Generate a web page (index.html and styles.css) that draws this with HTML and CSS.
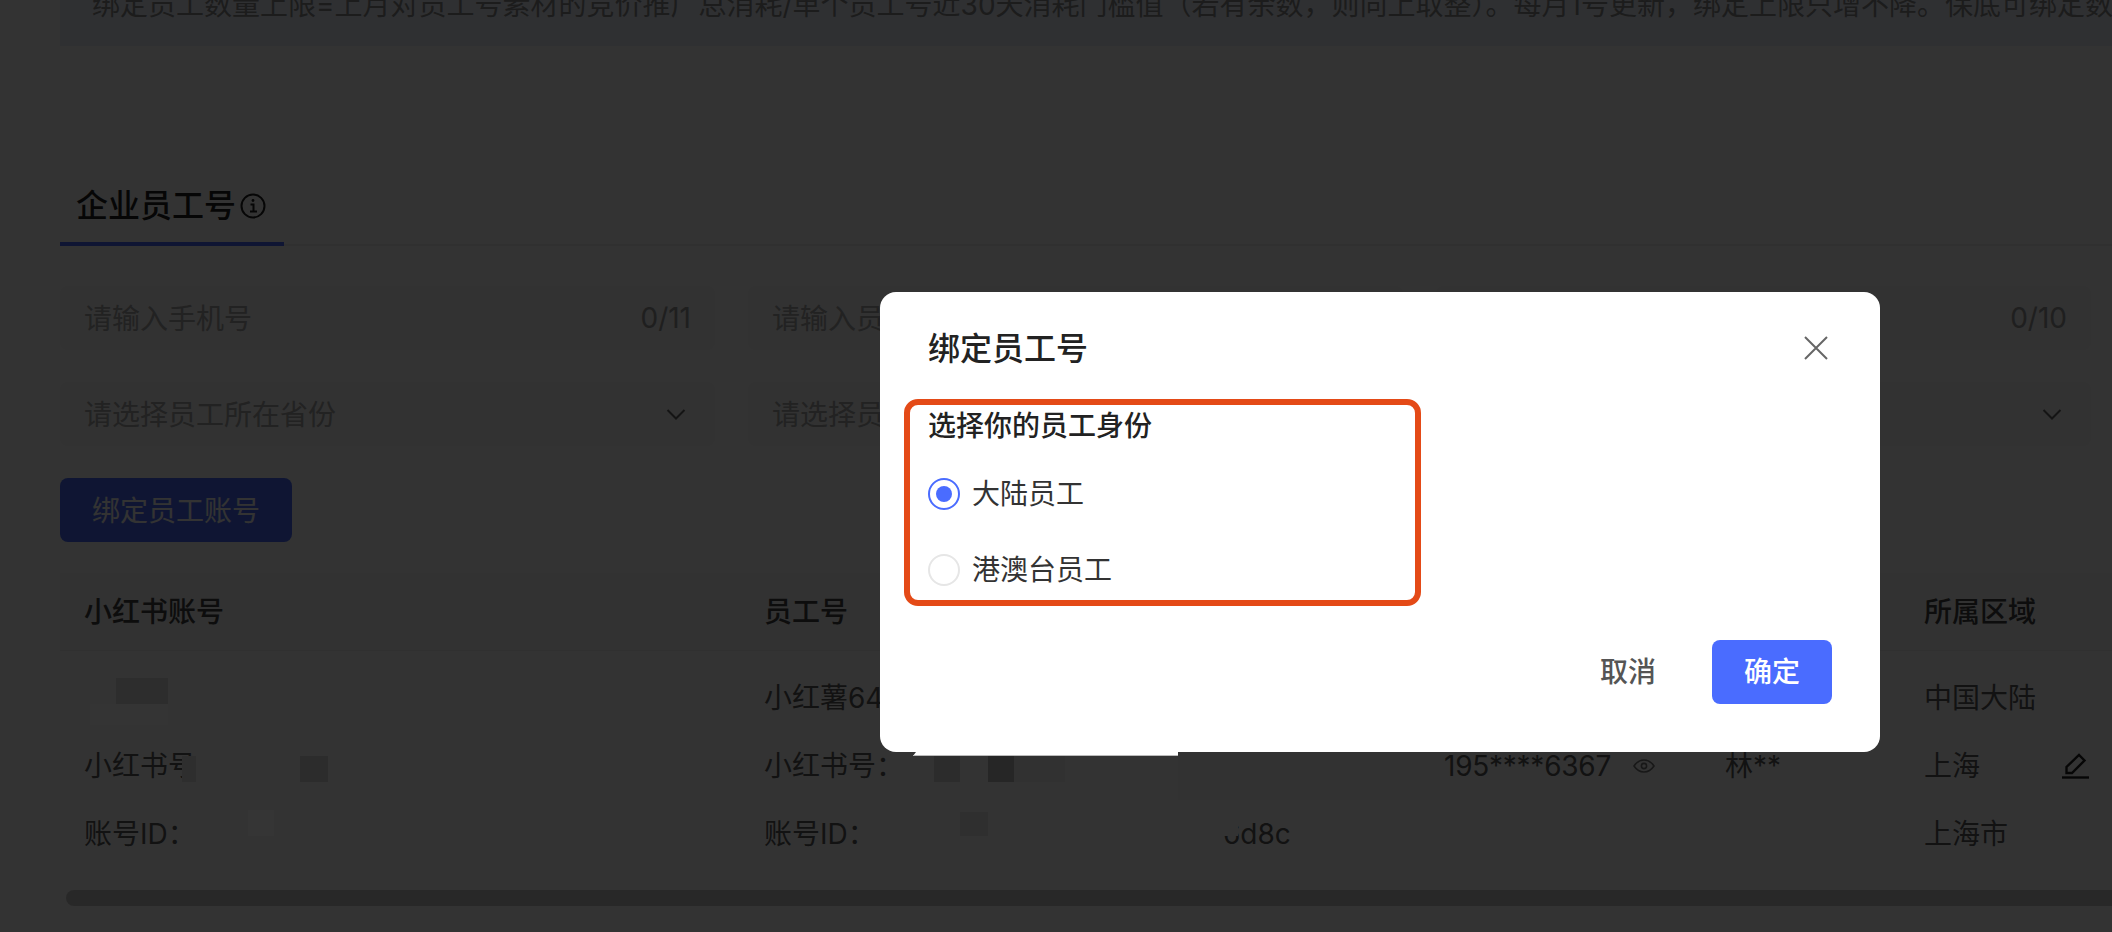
FILE: index.html
```html
<!DOCTYPE html>
<html lang="zh-CN">
<head>
	<meta charset="UTF-8">
	<title>绑定员工号</title>
	<link rel="stylesheet" href="styles.css">
</head>
<body>
	<div class="page">
		<div class="notice">绑定员工数量上限=上月对员工号素材的竞价推广总消耗/单个员工号近30天消耗门槛值（若有余数，则向上取整）。每月1号更新，绑定上限只增不降。保底可绑定数量为10个，如需增加请联系对应销售</div>

		<div class="tabs">
			<div class="tab">
				企业员工号
				<svg class="tab_info" viewBox="0 0 26 26" fill="none" stroke="currentColor" stroke-width="2">
					<circle cx="13" cy="13" r="11.5"/>
					<path d="M10.5 11.5h3v7M10 18.5h7"/>
					<circle cx="13" cy="7.5" r="1.4" fill="currentColor" stroke="none"/>
				</svg>
			</div>
		</div>

		<div class="filters">
			<div class="field"><span>请输入手机号</span><em>0/11</em></div>
			<div class="field"><span>请输入员工姓名</span><em>0/10</em></div>
			<div class="field"><span>请输入小红书号</span><em>0/10</em></div>
			<div class="field"><span>请选择员工所在省份</span><svg class="chev" viewBox="0 0 20 11" fill="none" stroke="currentColor" stroke-width="2"><path d="M1.5 1l8.5 8.5L18.5 1"/></svg></div>
			<div class="field"><span>请选择员工所在城市</span><svg class="chev" viewBox="0 0 20 11" fill="none" stroke="currentColor" stroke-width="2"><path d="M1.5 1l8.5 8.5L18.5 1"/></svg></div>
			<div class="field"><span>请选择所属区域</span><svg class="chev" viewBox="0 0 20 11" fill="none" stroke="currentColor" stroke-width="2"><path d="M1.5 1l8.5 8.5L18.5 1"/></svg></div>
		</div>

		<div class="bind_btn">绑定员工账号</div>

		<div class="table">
			<div class="row head">
				<div>小红书账号</div>
				<div>员工号</div>
				<div>手机号</div>
				<div>姓名</div>
				<div>所属区域</div>
			</div>
			<div class="row body">
				<div class="cell">
					<p>&nbsp;</p>
					<p>小红书号：</p>
					<p>账号ID：</p>
				</div>
				<div class="cell">
					<p>小红薯64</p>
					<p>小红书号：</p>
					<p class="id_line">账号ID：<span>6d8c</span></p>
				</div>
				<div class="cell">
					<p>&nbsp;</p>
					<p class="phone">195****6367
						<svg class="eye" viewBox="0 0 22 14" fill="none" stroke="currentColor" stroke-width="1.6">
							<path d="M1 7c2.600-3.900 5.900-6 10-6s7.400 2.100 10 6c-2.600 3.900-5.900 6-10 6S3.600 10.900 1 7z"/>
							<circle cx="11" cy="7" r="2.600"/>
						</svg>
					</p>
					<p>&nbsp;</p>
				</div>
				<div class="cell">
					<p>&nbsp;</p>
					<p>林**</p>
					<p>&nbsp;</p>
				</div>
				<div class="cell">
					<p>中国大陆</p>
					<p class="area">上海
						<svg class="pen" viewBox="0 0 28 28" fill="none" stroke="currentColor" stroke-width="2.4">
							<path d="M4.500 21v-6L17 3l5.500 5.500L10 21z"/>
							<path d="M0 25.500h27"/>
						</svg>
					</p>
					<p>上海市</p>
				</div>
			</div>
			<div class="scroll"><div class="scroll_thumb"></div></div>
		</div>
	</div>

	<div class="mask">
		<i class="blur b1"></i>
		<i class="blur b2"></i>
		<i class="blur b3"></i>
		<i class="blur b4"></i>
		<i class="blur b5"></i>
		<i class="blur b6"></i>
		<i class="blur b7"></i>
		<i class="blur b8"></i>
		<i class="blur b9"></i>
		<i class="blur b10"></i>
		<i class="blur b11"></i>
		<i class="blur b12"></i>

		<div class="dialog">
			<div class="dialog_head">
				<span>绑定员工号</span>
				<svg class="close" viewBox="0 0 24 24" fill="none" stroke="currentColor" stroke-width="2"><path d="M1 1l22 22M23 1L1 23"/></svg>
			</div>
			<div class="dialog_body">
				<div class="dialog_label">选择你的员工身份</div>
				<div class="options">
					<div class="option"><i class="radio on"></i>大陆员工</div>
					<div class="option"><i class="radio"></i>港澳台员工</div>
				</div>
			</div>
			<div class="dialog_foot">
				<div class="btn_cancel">取消</div>
				<div class="btn_ok">确定</div>
			</div>
			<div class="mark"></div>
			<div class="sliver"></div>
		</div>
	</div>
</body>
</html>
```

FILE: styles.css
```css
html, body {
	margin: 0;
	height: 100%;
	overflow: hidden;
}
body {
	background: #fff;
	font-family: Inter, "Noto Sans CJK SC", sans-serif;
	font-size: 28px;
	color: #5c5c5c;
}
p {
	margin: 0;
}
.page {
	padding-left: 60px;
}

.notice {
	height: 46px;
	padding: 0 0 20px 32px;
	box-sizing: border-box;
	display: flex;
	align-items: flex-end;
	overflow: hidden;
	white-space: nowrap;
	line-height: 42px;
	background: #ebf0fa;
	color: #8c8c8c;
}

.tabs {
	margin-top: 136px;
	height: 62px;
	border-bottom: 2px solid #eee;
}
.tab {
	height: 60px;
	padding: 0 18px 0 16px;
	display: inline-flex;
	align-items: flex-start;
	gap: 4px;
	border-bottom: 4px solid #4a6cff;
	font-size: 32px;
	font-weight: 500;
	line-height: 48px;
	color: #1f1f1f;
}
.tab_info {
	width: 26px;
	height: 26px;
	margin-top: 11px;
}

.filters {
	width: 2031px;
	margin-top: 40px;
	display: grid;
	grid-template-columns: repeat(3, 655px);
	gap: 32px 33px;
}
.field {
	height: 64px;
	padding: 0 24px;
	display: flex;
	align-items: center;
	justify-content: space-between;
	background: #f7f7f7;
	border-radius: 8px;
	color: #a8a8a8;
}
.field span {
	margin-bottom: 2px;
}
.field em {
	font-style: normal;
	color: #999;
}
.chev {
	width: 20px;
	height: 11px;
	margin-right: 5px;
	color: #666;
}

.bind_btn {
	width: 232px;
	height: 64px;
	margin-top: 32px;
	line-height: 66px;
	text-align: center;
	background: #4a6cff;
	border-radius: 8px;
	color: #fff;
}

.table {
	margin-top: 31px;
}
.row {
	display: grid;
	grid-template-columns: 680px 680px 281px 199px 212px;
}
.row > div {
	padding-left: 24px;
}
.head {
	height: 77px;
	line-height: 79px;
	background: #f8f8f8;
	border-bottom: 1px solid #ededed;
	font-weight: 500;
	color: #444;
}
.body {
	padding: 13px 0 12px;
}
.cell p {
	height: 68px;
	line-height: 68px;
	white-space: nowrap;
}
.id_line {
	display: flex;
}
.id_line span {
	width: 415px;
	text-align: right;
}
.phone {
	display: flex;
	align-items: center;
	gap: 22px;
	letter-spacing: -.25px;
}
.eye {
	width: 22px;
	height: 14px;
	color: #777;
}
.area {
	display: flex;
	align-items: center;
	justify-content: space-between;
}
.pen {
	width: 28px;
	height: 28px;
	margin-right: 22px;
	color: #222;
}
.scroll {
	height: 32px;
	padding: 10px 0 6px 6px;
	box-sizing: border-box;
	background: #fdfdfd;
}
.scroll_thumb {
	height: 16px;
	background: #c8c8c8;
	border-radius: 8px 0 0 8px;
}

.mask {
	position: fixed;
	inset: 0;
	background: rgba(0, 0, 0, .8);
}
/* 打码的色块 */
.blur {
	position: absolute;
}
.b1 { left: 116px; top: 678px; width: 52px; height: 26px; background: #2d2d2d; }
.b2 { left: 90px; top: 704px; width: 78px; height: 21px; background: #343434; }
.b3 { left: 182px; top: 756px; width: 14px; height: 26px; background: #2e2e2e; }
.b4 { left: 300px; top: 756px; width: 28px; height: 26px; background: #2c2c2c; }
.b5 { left: 248px; top: 810px; width: 26px; height: 26px; background: #353535; }
.b6 { left: 934px; top: 756px; width: 26px; height: 26px; background: #2c2c2c; }
.b7 { left: 988px; top: 756px; width: 26px; height: 26px; background: #262626; }
.b8 { left: 1014px; top: 756px; width: 51px; height: 26px; background: #313131; }
.b9 { left: 960px; top: 812px; width: 28px; height: 24px; background: #2f2f2f; }
.b10 { left: 1198px; top: 812px; width: 40px; height: 24px; background: #333; }
.b11 { left: 1178px; top: 752px; width: 262px; height: 48px; background: #323232; }
.b12 { left: 196px; top: 756px; width: 30px; height: 26px; background: #333; }

.dialog {
	position: absolute;
	left: 880px;
	top: 292px;
	width: 1000px;
	height: 460px;
	padding: 32px 48px 0;
	box-sizing: border-box;
	background: #fff;
	border-radius: 16px;
	color: #333;
}
.dialog_head {
	height: 48px;
	display: flex;
	align-items: center;
	justify-content: space-between;
	font-size: 32px;
	font-weight: 500;
	color: #222;
}
.dialog_head span {
	margin-bottom: 4px;
}
.close {
	width: 24px;
	height: 24px;
	margin-right: 4px;
	color: #666;
}
.dialog_body {
	margin-top: 34px;
}
.dialog_label {
	line-height: 40px;
	font-weight: 500;
	color: #222;
}
.options {
	margin-top: 28px;
	display: flex;
	flex-direction: column;
	gap: 36px;
}
.option {
	height: 40px;
	display: flex;
	align-items: center;
	gap: 12px;
	line-height: 38px;
}
.radio {
	width: 32px;
	height: 32px;
	box-sizing: border-box;
	border: 2px solid #e6e6e6;
	border-radius: 50%;
	display: flex;
	align-items: center;
	justify-content: center;
}
.radio.on {
	border-color: #4a6cff;
}
.radio.on::after {
	content: "";
	width: 16px;
	height: 16px;
	border-radius: 50%;
	background: #4a6cff;
}
.dialog_foot {
	margin-top: 50px;
	display: flex;
	justify-content: flex-end;
	gap: 24px;
}
.btn_cancel, .btn_ok {
	width: 120px;
	height: 64px;
	line-height: 64px;
	text-align: center;
	font-weight: 500;
	border-radius: 8px;
}
.btn_cancel {
	color: #555;
}
.btn_ok {
	background: #4a6cff;
	color: #fff;
}
/* 红框标注 */
.mark {
	position: absolute;
	left: 24px;
	top: 107px;
	width: 517px;
	height: 207px;
	box-sizing: border-box;
	border: 6px solid #e44a17;
	border-radius: 14px;
}
.sliver {
	position: absolute;
	left: 33px;
	top: 460px;
	width: 265px;
	height: 4px;
	background: #fff;
	border-bottom: 1px solid #bbb;
	box-sizing: border-box;
	clip-path: polygon(3px 0, 100% 0, 100% 100%, 0 100%);
}
```
